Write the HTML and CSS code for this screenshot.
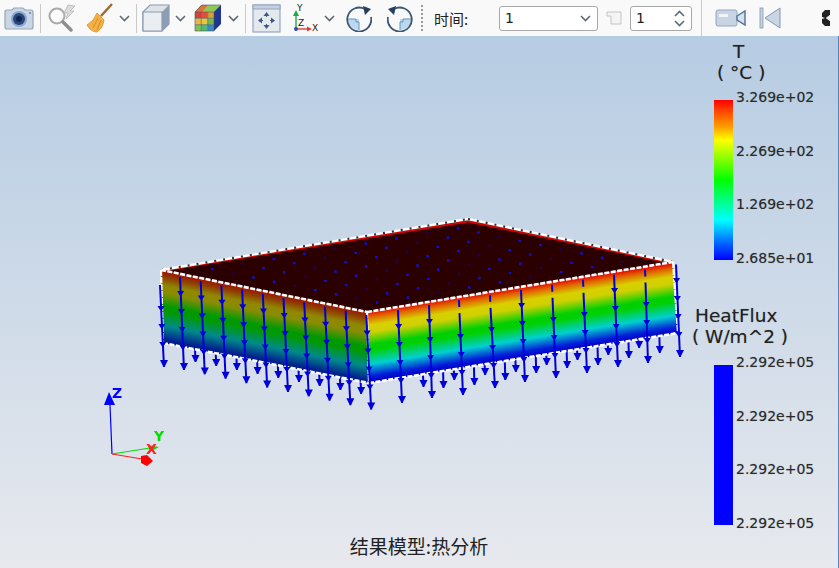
FILE: index.html
```html
<!DOCTYPE html>
<html lang="zh">
<head>
    <meta charset="UTF-8">
    <title>结果模型</title>
    <link rel="stylesheet" href="styles.css">
</head>
<body>
    <div class="app">
        <div class="toolbar">
            <svg class="ic tb-camera" width="30" height="24" viewBox="0 0 30 24">
                <path d="M1 6 Q1 4 3 4 H8 L10 2 H19 L21 4 H27 Q29 4 29 6 V21 Q29 23 27 23 H3 Q1 23 1 21Z" fill="#c9d6e6" stroke="#93a6bf" stroke-width="1.2"/>
                <circle cx="15" cy="13" r="8" fill="#8ea6c8"/>
                <circle cx="15" cy="13" r="6" fill="#274780"/>
                <circle cx="15" cy="13" r="3" fill="#0f2350"/>
                <circle cx="26" cy="7" r="1" fill="#6f86a8"/>
            </svg>
            <div class="sep tb-sep1"></div>
            <svg class="ic tb-search" width="30" height="28" viewBox="0 0 30 28">
                <circle cx="10" cy="12" r="7.5" fill="#fbfbfb" stroke="#a9a9a9" stroke-width="2"/>
                <path d="M16 18 L24 26" stroke="#8d8d8d" stroke-width="3.4" stroke-linecap="round"/>
                <path d="M21 1 L17 9 H21 L19 15 L27 7 H23 L28 2Z" fill="#dcdcdc" stroke="#b5b5b5" stroke-width=".8"/>
            </svg>
            <svg class="ic tb-broom" width="27" height="30" viewBox="0 0 27 30">
                <path d="M26 1 L15 13" stroke="#9c6a2c" stroke-width="2.4"/>
                <path d="M11 10 L18 17 Q17 25 11 29 Q5 29 1 22 Q8 18 11 10Z" fill="#f2b045" stroke="#d98e22" stroke-width=".8"/>
                <path d="M12 15 L7 25 M15 17 L11 27" stroke="#d98e22" stroke-width="1"/>
            </svg>
            <svg class="ic chev tb-chev1" width="11" height="7" viewBox="0 0 11 7"><path d="M1 1 L5.500 5.500 L10 1"/></svg>
            <div class="sep tb-sep2"></div>
            <svg class="ic tb-cube" width="28" height="28" viewBox="0 0 28 28">
                <path d="M8 1 H27 V20 L20 27 H1 V8Z" fill="#dfe3e9" stroke="#8a9ab0" stroke-width="1.2"/>
                <path d="M1 8 H20 V27 H1Z" fill="#eaedf1" stroke="#8a9ab0" stroke-width="1.2"/>
                <path d="M20 8 L27 1 V20 L20 27Z" fill="#8d9db3"/>
            </svg>
            <svg class="ic chev tb-chev2" width="11" height="7" viewBox="0 0 11 7"><path d="M1 1 L5.500 5.500 L10 1"/></svg>
            <svg class="ic tb-colorcube" width="28" height="28" viewBox="0 0 28 28">
                <path d="M8 1 H27 L20 8 H1Z" fill="#8fc85a"/>
                <path d="M7 1 H14 L8 8 H1Z" fill="#e0703a"/>
                <path d="M20 8 L27 1 V20 L20 27Z" fill="#1f3590"/>
                <rect x="1" y="8" width="6.300" height="6.300" fill="#d9403a"/><rect x="7.300" y="8" width="6.300" height="6.300" fill="#e0503a"/><rect x="13.700" y="8" width="6.300" height="6.300" fill="#d9a02f"/>
                <rect x="1" y="14.300" width="6.300" height="6.300" fill="#e8b83a"/><rect x="7.300" y="14.300" width="6.300" height="6.300" fill="#e6c83a"/><rect x="13.700" y="14.300" width="6.300" height="6.300" fill="#6fba4a"/>
                <rect x="1" y="20.700" width="6.300" height="6.300" fill="#7fc050"/><rect x="7.300" y="20.700" width="6.300" height="6.300" fill="#52b87c"/><rect x="13.700" y="20.700" width="6.300" height="6.300" fill="#3a8ac4"/>
                <path d="M7.300 8 V27 M13.700 8 V27 M1 14.300 H20 M1 20.700 H20 M1 8 H20 V27 H1Z M20 8 L27 1 H8 L1 8" stroke="#4a5563" stroke-width=".6" fill="none"/>
            </svg>
            <svg class="ic chev tb-chev3" width="11" height="7" viewBox="0 0 11 7"><path d="M1 1 L5.500 5.500 L10 1"/></svg>
            <div class="sep tb-sep3"></div>
            <svg class="ic tb-fit" width="29" height="29" viewBox="0 0 29 29">
                <rect x="1" y="1" width="27" height="27" fill="#e4e9f0" stroke="#95a6bd" stroke-width="1.2"/>
                <rect x="1" y="1" width="27" height="4" fill="#c4d0df" stroke="#95a6bd" stroke-width="1"/>
                <path d="M14.500 8 L11.500 12 H17.500Z M14.500 25 L11.500 21 H17.500Z M6 16.500 L10 13.500 V19.500Z M23 16.500 L19 13.500 V19.500Z" fill="#3c5a85"/>
                <path d="M14.500 11 V13 M14.500 20 V22 M9 16.500 H11 M18 16.500 H20" stroke="#3c5a85" stroke-width="1"/>
            </svg>
            <svg class="ic tb-axes" width="26" height="30" viewBox="0 0 26 30">
                <path d="M4 26 V12" stroke="#1fa84a" stroke-width="1.4"/>
                <path d="M4 7 L1 13 H7Z" fill="#1fa84a"/>
                <path d="M4 26 H18" stroke="#e23c3c" stroke-width="1.4"/>
                <path d="M20 26 L15 23.500 V28.500Z" fill="#e23c3c"/>
                <circle cx="4" cy="26" r="2" fill="#2a4ea8"/>
                <text class="axis-txt" x="5" y="8">Y</text>
                <text class="axis-txt" x="6" y="23">Z</text>
                <text class="axis-txt" x="20" y="28">X</text>
            </svg>
            <svg class="ic chev tb-chev4" width="11" height="7" viewBox="0 0 11 7"><path d="M1 1 L5.500 5.500 L10 1"/></svg>
            <svg class="ic tb-rot1" width="26" height="28" viewBox="0 0 26 28">
                <path d="M2 15 H13 V26 A11 11 0 0 1 2 15Z" fill="#bcd8ef"/>
                <path d="M2 15 H10 V18 H13 V26" fill="none" stroke="#5e93c4" stroke-width="1"/>
                <path d="M19 5 A12 12 0 1 0 25 13" fill="none" stroke="#3c5873" stroke-width="1.800"/>
                <path d="M17 2 L25 5 L19 11Z" fill="#23415f"/>
            </svg>
            <svg class="ic tb-rot2" width="26" height="28" viewBox="0 0 26 28">
                <path d="M24 15 H13 V26 A11 11 0 0 0 24 15Z" fill="#bcd8ef"/>
                <path d="M24 15 H16 V18 H13 V26" fill="none" stroke="#5e93c4" stroke-width="1"/>
                <path d="M7 5 A12 12 0 1 1 1 13" fill="none" stroke="#3c5873" stroke-width="1.800"/>
                <path d="M9 2 L1 5 L7 11Z" fill="#23415f"/>
            </svg>
            <div class="grip tb-grip"></div>
            <span class="tb-label">时间:</span>
            <div class="combo">
                <span>1</span>
                <svg class="chev" width="11" height="7" viewBox="0 0 11 7"><path d="M1 1 L5.500 5.500 L10 1"/></svg>
            </div>
            <svg class="ic tb-page" width="16" height="14" viewBox="0 0 16 14">
                <path d="M1 1 H15 V13 H5 V5 H1Z" fill="#f4f4f4" stroke="#c4c4c4"/>
            </svg>
            <div class="spin">
                <span>1</span>
                <div class="spin-arrows">
                    <svg class="chev" width="11" height="7" viewBox="0 0 11 7"><path d="M1 6 L5.500 1.500 L10 6"/></svg>
                    <svg class="chev" width="11" height="7" viewBox="0 0 11 7"><path d="M1 1 L5.500 5.500 L10 1"/></svg>
                </div>
            </div>
            <div class="sep tb-sep4"></div>
            <svg class="ic tb-video" width="31" height="18" viewBox="0 0 31 18">
                <rect x="1" y="1" width="21" height="16" rx="2" fill="#c8d4e2" stroke="#93a6bf"/>
                <rect x="4" y="5" width="9" height="3" fill="#f2f4f7"/>
                <path d="M22 7 L30 2 V16 L22 11Z" fill="#d6e0ea" stroke="#4f7196" stroke-width="1.400"/>
            </svg>
            <svg class="ic tb-skip" width="22" height="22" viewBox="0 0 22 22">
                <rect x="1" y="1" width="3" height="20" fill="#c5d2e1" stroke="#8598b2" stroke-width=".8"/>
                <path d="M21 1 V21 L6 11Z" fill="#c9d5e3" stroke="#8598b2"/>
            </svg>
            <svg class="ic tb-more" width="9" height="18" viewBox="0 0 9 18">
                <path d="M1 4 L4 1 H9 V6 L5 9 L9 12 V17 H4 L1 14 V10 L4 9 L1 8Z" fill="#222"/>
                <path d="M5 9 L9 6 V12Z" fill="#eee"/>
            </svg>
        </div>

        <div class="viewport">
            <svg id="scene" class="scene" viewBox="0 36 839 532" width="839" height="532">
                <defs>
                    <filter id="soft"><feGaussianBlur stdDeviation="0.4"/></filter>
                    <linearGradient id="faceLeft" gradientUnits="userSpaceOnUse" x1="264" y1="291" x2="250" y2="361">
                        <stop offset="0" stop-color="#a01000"/>
                        <stop offset=".08" stop-color="#8f3a00"/>
                        <stop offset=".2" stop-color="#8f8800"/>
                        <stop offset=".3" stop-color="#8a8c00"/>
                        <stop offset=".48" stop-color="#009a00"/>
                        <stop offset=".55" stop-color="#009a00"/>
                        <stop offset=".75" stop-color="#008a8a"/>
                        <stop offset=".92" stop-color="#002a90"/>
                        <stop offset="1" stop-color="#000f80"/>
                    </linearGradient>
                    <linearGradient id="faceRight" gradientUnits="userSpaceOnUse" x1="520" y1="287" x2="531" y2="356">
                        <stop offset="0" stop-color="#e60000"/>
                        <stop offset=".08" stop-color="#e06000"/>
                        <stop offset=".2" stop-color="#d8d000"/>
                        <stop offset=".3" stop-color="#d0d000"/>
                        <stop offset=".48" stop-color="#00d000"/>
                        <stop offset=".55" stop-color="#00d000"/>
                        <stop offset=".75" stop-color="#00d0d0"/>
                        <stop offset=".92" stop-color="#0020d8"/>
                        <stop offset="1" stop-color="#0000c8"/>
                    </linearGradient>
                </defs>
                <g id="model" filter="url(#soft)"></g>
                <g filter="url(#soft)">
                    <path d="M112 454 L110 405" stroke="#0000ff" stroke-width="1.200" fill="none"/>
                    <path d="M109 392 L104 405 H115Z" fill="#0000ff"/>
                    <path d="M112 454 L150 448" stroke="#00e000" stroke-width="1.200" fill="none"/>
                    <path d="M148 445 L159 447 L150 452Z" fill="#00e000"/>
                    <path d="M112 454 L142 459" stroke="#ff2020" stroke-width="1.200" fill="none"/>
                    <path d="M141 456 L147 455 L153 461 L147 466 L141 463Z" fill="#ff0000"/>
                    <text class="axis-z" x="112" y="398">Z</text>
                    <text class="axis-y" x="154" y="441">Y</text>
                    <text class="axis-x" x="146" y="454">X</text>
                </g>
            </svg>

            <div class="legend legend-t">
                <div class="legend-title">T</div>
                <div class="legend-unit">( °C )</div>
                <div class="legend-body">
                    <div class="colorbar rainbow"></div>
                    <div class="ticks">
                        <span>3.269e+02</span>
                        <span>2.269e+02</span>
                        <span>1.269e+02</span>
                        <span>2.685e+01</span>
                    </div>
                </div>
            </div>

            <div class="legend legend-flux">
                <div class="legend-title">HeatFlux</div>
                <div class="legend-unit">( W/m^2 )</div>
                <div class="legend-body">
                    <div class="colorbar flat"></div>
                    <div class="ticks">
                        <span>2.292e+05</span>
                        <span>2.292e+05</span>
                        <span>2.292e+05</span>
                        <span>2.292e+05</span>
                    </div>
                </div>
            </div>

            <div class="caption">结果模型:热分析</div>
        </div>
    </div>
    <script src="scene.js"></script>
</body>
</html>
```

FILE: styles.css
```css
html, body {
    margin: 0;
    padding: 0;
    height: 100%;
    overflow: hidden;
}
body {
    font-family: "DejaVu Sans", "Noto Sans CJK SC", sans-serif;
    color: #222;
}
.app {
    display: flex;
    flex-direction: column;
    width: 839px;
    height: 568px;
}
.toolbar {
    display: flex;
    align-items: center;
    flex: 0 0 36px;
    padding-left: 4px;
    background-color: #f9f9f9;
    box-sizing: border-box;
}
.ic {
    flex: none;
}
.chev path {
    fill: none;
    stroke: #5d6b78;
    stroke-width: 1.6;
}
.sep {
    flex: none;
    width: 1px;
    height: 29px;
    background-color: #c9c9c9;
}
.grip {
    flex: none;
    width: 2px;
    height: 26px;
    background-image: linear-gradient(#9a9a9a 50%, transparent 50%);
    background-size: 2px 4px;
}
.tb-sep1 { margin-left: 6px; }
.tb-search { margin-left: 6px; }
.tb-broom { margin-left: 9px; }
.tb-chev1 { margin-left: 6px; }
.tb-sep2 { margin-left: 6px; }
.tb-cube { margin-left: 5px; }
.tb-chev2 { margin-left: 5px; }
.tb-colorcube { margin-left: 8px; }
.tb-chev3 { margin-left: 6px; }
.tb-sep3 { margin-left: 6px; }
.tb-fit { margin-left: 6px; }
.tb-axes { margin-left: 11px; }
.tb-chev4 { margin-left: 6px; }
.tb-rot1 { margin-left: 11px; }
.tb-rot2 { margin-left: 15px; }
.tb-grip { margin-left: 8px; }
.tb-label {
    flex: none;
    width: 65px;
    margin-left: 11px;
    font-size: 15px;
    font-family: "Noto Sans CJK SC", sans-serif;
}
.combo, .spin {
    display: flex;
    align-items: center;
    justify-content: space-between;
    flex: none;
    box-sizing: border-box;
    height: 25px;
    padding: 0 6px 0 5px;
    background-color: #fff;
    border: 1px solid #a8a8a8;
    border-radius: 3px;
    font-size: 14px;
}
.combo {
    width: 99px;
}
.spin {
    width: 62px;
    margin-left: 8px;
}
.spin-arrows {
    display: flex;
    flex-direction: column;
    gap: 3px;
}
.spin-arrows svg {
    display: block;
}
.tb-page { margin-left: 8px; }
.tb-sep4 { margin-left: 9px; height: 36px; }
.tb-video { margin-left: 13px; }
.tb-skip { margin-left: 13px; }
.tb-more { margin-left: 40px; }
.axis-txt {
    font-family: "DejaVu Sans", sans-serif;
    font-size: 9px;
    fill: #222;
}

.viewport {
    position: relative;
    flex: 1;
    box-sizing: border-box;
    background: linear-gradient(#b6cce3, #e7e9ee);
    border-right: 1px solid #5b82b5;
    border-bottom: 1px solid #a9a9a9;
}
.scene {
    display: block;
}
.axis-z, .axis-y, .axis-x {
    font-family: "DejaVu Sans", sans-serif;
    font-size: 14px;
    font-weight: bold;
}
.axis-z { fill: #0000ff; }
.axis-y { fill: #00e000; }
.axis-x { fill: #ff2020; }

.legend {
    position: absolute;
    left: 680px;
    width: 150px;
    text-shadow: 0 0 1px rgba(0, 0, 0, 0.3);
}
.legend-t { top: 5px; }
.legend-flux { top: 269px; }
.legend-title, .legend-unit {
    font-size: 18.5px;
    line-height: 21px;
    white-space: nowrap;
}
.legend-t .legend-unit {
    padding-left: 37px;
}
.legend-t .legend-title {
    padding-left: 53px;
}
.legend-flux .legend-title {
    padding-left: 15px;
}
.legend-flux .legend-unit {
    padding-left: 12px;
}
.legend-body {
    display: flex;
    margin-top: 17px;
    padding-left: 34px;
}
.legend-flux .legend-body {
    margin-top: 18px;
}
.colorbar {
    flex: none;
    width: 19px;
    height: 160px;
}
.rainbow {
    background: linear-gradient(#ff0000, #ff5000 8%, #ffa000 17%, #ffff00 25%, #00ff00 50%, #00ffff 75%, #0060ff 90%, #0000ff);
}
.flat {
    background-color: #0000ff;
}
.ticks {
    display: flex;
    flex-direction: column;
    justify-content: space-between;
    height: 179px;
    margin: -12px 0 0 3px;
    font-size: 14px;
    line-height: 18px;
    color: #2a2a2a;
}
.caption {
    position: absolute;
    left: 0;
    right: 0;
    bottom: 10px;
    text-align: center;
    font-family: "Noto Sans CJK SC", sans-serif;
    font-size: 19px;
    line-height: 24px;
    color: #222;
}
```

FILE: scene.js
```js
// draws the heat model and its flux arrows into the svg
const NS = 'http://www.w3.org/2000/svg';
const model = document.getElementById('model');
const BLUE = '#0000d8';

function add(tag, attrs) {
    const el = document.createElementNS(NS, tag);
    Object.keys(attrs).forEach(k => el.setAttribute(k, attrs[k]));
    model.appendChild(el);
    return el;
}

function line(x1, y1, x2, y2, color, width, dash) {
    const attrs = { x1, y1, x2, y2, stroke: color, 'stroke-width': width };
    if (dash) attrs['stroke-dasharray'] = dash;
    return add('line', attrs);
}

function head(x, y, w, h) {
    add('path', { d: `M${x - w / 2} ${y} H${x + w / 2} L${x + 1} ${y + h} H${x - 1}Z`, fill: BLUE });
}

// line from top to tip with arrow heads stacked along it
function arrow(x1, y1, x2, y2, step) {
    line(x1, y1, x2, y2, BLUE, 2);
    head(x2, y2 - 7, 8, 6);
    for (let y = y2 - 7 - step; y > y1 + 4; y -= step) {
        const t = (y - y1) / (y2 - y1);
        head(x1 + (x2 - x1) * t, y, 7, 4);
    }
}

const L = [161, 270], B = [468, 219], R = [673, 262], F = [367, 312];
const LB = [163, 343], FB = [369, 383], RB = [678, 333];

function poly(points, fill) {
    add('polygon', { points: points.map(p => p.join(',')).join(' '), fill });
}

// short arrows behind the walls, left side
for (let k = 0; k < 9; k++) {
    const end = 362 + 4 * k;
    arrow(195 + 20.7 * k, end - 14, 195.5 + 20.7 * k, end, 20);
}
// short arrows, right side
[387, 380, 375, 372, 365, 360, 355, 348].forEach((end, k) => {
    arrow(423 + 30.8 * k, end - 12, 423.5 + 30.8 * k, end, 20);
});
[388, 385, 380, 373, 368, 365, 358, 353].forEach((end, k) => {
    arrow(443 + 30.9 * k, end - 20, 443.5 + 30.9 * k, end, 9);
});

poly([L, B, R, F], '#2a0000');
poly([L, F, FB, LB], 'url(#faceLeft)');
poly([F, R, RB, FB], 'url(#faceRight)');

// red rim inside the far wall
line(L[0] + 3, L[1] + 0.5, B[0], B[1] + 2.5, '#d80000', 1.8);
line(B[0], B[1] + 2.5, R[0] - 5, R[1] + 0.5, '#d80000', 1.8);

// nodes on the top face
for (let i = 1; i < 10; i++) {
    for (let j = 1; j < 10; j++) {
        const x = L[0] + (B[0] - L[0]) * i / 10 + (F[0] - L[0]) * j / 10;
        const y = L[1] + (B[1] - L[1]) * i / 10 + (F[1] - L[1]) * j / 10;
        add('rect', {
            x: x - 1.2, y: y - 1.2, width: 2.4, height: 2.4,
            fill: '#1010e0',
            opacity: (i + j) % 3 === 0 ? 0.4 : 1
        });
    }
}

// edges
[[L, B], [B, R]].forEach(([a, b]) => {
    line(a[0], a[1], b[0], b[1], '#ffffff', 2.4);
    line(a[0], a[1], b[0], b[1], '#333333', 2.2, '2 7');
});
[[L, F], [F, R], [LB, FB], [FB, RB]].forEach(([a, b]) => {
    line(a[0], a[1], b[0], b[1], '#ffffff', 2.6, '5 1.500');
});
[[L, LB], [F, FB], [R, RB]].forEach(([a, b]) => {
    line(a[0], a[1], b[0], b[1], '#ffffff', 2.2, '6 1');
});

// long arrows over the left wall
arrow(160, 285, 164, 367, 18);
for (let i = 1; i <= 10; i++) {
    const x1 = 180 + (i - 1) * 20.7;
    const x2 = 184 + (i - 1) * 20.8;
    arrow(x1, 270 + (x1 - 161) * 0.204 + 3, x2, 370 + (i - 1) * 4.4, 18);
}

// long arrows over the right wall, some with a gap below the edge
const rightEnds = [
    [398, 402, 403], [429, 432, 398], [459, 463, 395], [490, 495, 388], [521, 525, 382],
    [552, 556, 378], [583, 587, 373], [614, 618, 367], [645, 648, 363], [676, 680, 357]
];
const gaps = [0, 0, 1, 1, 0, 1, 1, 0, 1, 0];
rightEnds.forEach(([x1, x2, end], j) => {
    const top = 312 - (x1 - 367) * 0.1634 + 3;
    if (gaps[j]) {
        line(x1, top, x1 + 0.3, top + 7, BLUE, 2);
        arrow(x1 + 0.5, top + 13, x2, end, 18);
    } else {
        arrow(x1, top, x2, end, 18);
    }
});
```
